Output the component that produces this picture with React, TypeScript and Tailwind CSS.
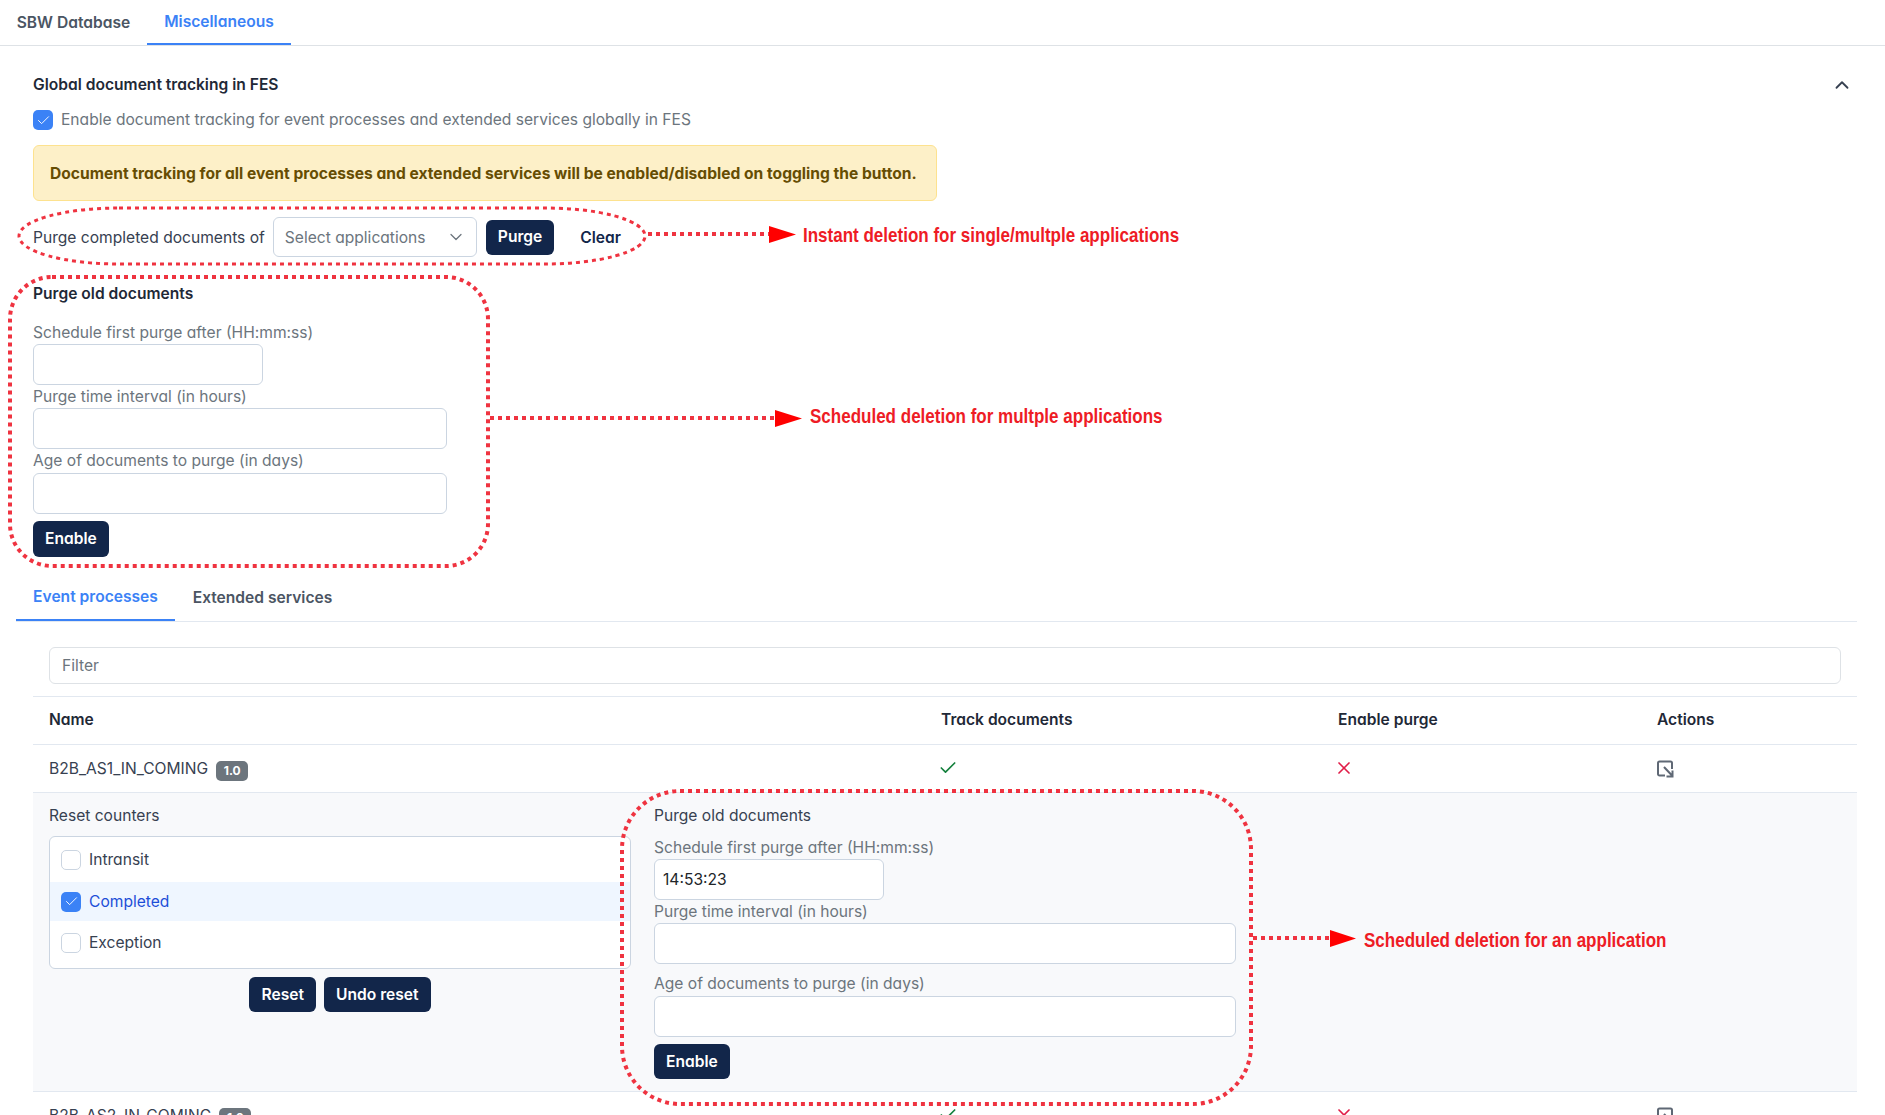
import React from 'react';
import { Check, ChevronDown, ChevronUp, X } from 'lucide-react';

const inter = "font-['Inter',sans-serif] [font-feature-settings:'cv11']";

const DarkButton = ({ label, className = '' }: { label: string; className?: string }) => (
  <button className={`bg-[#12264a] text-white font-semibold text-[15.6px] rounded-[6px] h-[35px] px-3 ${className}`}>{label}</button>
);

const Box = ({ checked }: { checked?: boolean }) => (
  <span className={`w-[20px] h-[20px] shrink-0 rounded-[5px] flex items-center justify-center ${checked ? 'bg-[#3b82f6]' : 'bg-white border border-[#cbd5e1]'}`}>
    {checked && <Check size={15} strokeWidth={1.5} className="text-white" />}
  </span>
);

const Field = ({ label, className, value, gap }: { label: string; className: string; value?: string; gap?: string }) => (
  <div className={gap}>
    <div className="text-[#6c757d] text-[15.6px] leading-[23px]">{label}</div>
    <div className={`h-[41px] bg-white border border-[#cbd5e1] rounded-[6px] px-2 flex items-center text-[15.6px] text-[#212529] ${className}`}>{value}</div>
  </div>
);

const ActionIcon = () => (
  <svg className="-ml-[1px]" width="18" height="18" viewBox="0 0 18 18" fill="none" stroke="#5f6875" strokeWidth="2">
    <path d="M16 9V3a1.5 1.5 0 0 0-1.5-1.5h-11A1.5 1.5 0 0 0 2 3v11a1.5 1.5 0 0 0 1.5 1.5H9" />
    <path d="M8 7l8 8.5M16.5 10.5v6h-6" />
  </svg>
);

const Tab = ({ label, active, className }: { label: string; active?: boolean; className: string }) => (
  <div className={`h-full flex items-center justify-center font-semibold text-[15.6px] ${active ? 'text-[#3b82f6] border-b-2 border-[#3b82f6]' : 'text-[#4b5563]'} ${className}`}>{label}</div>
);

const Row = ({ name }: { name: string }) => (
  <div className="grid grid-cols-[892px_397px_319px_1fr] h-[47px] pl-4 items-center text-[15.6px] text-[#374151]">
    <div className="flex items-center gap-2">
      <span>{name}</span>
      <span className="mt-[4px] bg-[#6c757d] text-white text-[12px] font-bold rounded-[5px] w-[32px] h-[20px] flex items-center justify-center">1.0</span>
    </div>
    <div><Check size={20} strokeWidth={2} className="text-[#15803d] -ml-[3px] -mt-[2px]" /></div>
    <div><X size={20} strokeWidth={2} className="text-[#e11d48] -ml-[4px] -mt-[2px]" /></div>
    <ActionIcon />
  </div>
);

const noteFont = "font-['Liberation_Sans',sans-serif] font-bold text-[#ee1c25] text-[21px] leading-none whitespace-nowrap origin-left scale-x-[0.81]";

const Notes = () => (
  <svg className="absolute left-0 top-0" width="1885" height="1115" fill="none" stroke="#ef3340" strokeWidth="4" strokeDasharray="4 4">
    <rect x="19" y="208" width="626" height="56" rx="100" ry="28" strokeWidth="3" />
    <path d="M648 234H770" />
    <path d="M769 226L796 234.500L769 243Z" fill="#ff0000" stroke="none" />
    <rect x="10" y="277" width="478" height="289" rx="42" />
    <path d="M490 418H776" />
    <path d="M775 410L802 418.500L775 427Z" fill="#ff0000" stroke="none" />
    <rect x="622" y="791" width="629" height="313" rx="58" />
    <path d="M1253 938H1332" />
    <path d="M1330 930L1356 938.500L1330 947Z" fill="#ff0000" stroke="none" />
  </svg>
);

const App: React.FC = () => {
  return (
    <div className={`relative h-[1115px] overflow-hidden bg-white ${inter}`}>
      <div className="flex h-[46px] border-b border-[#dee2e6]">
        <Tab label="SBW Database" className="w-[147px]" />
        <Tab label="Miscellaneous" active className="w-[144px]" />
      </div>

      <div className="pl-[16px] pr-[28px]">
        <div className="pl-[17px] pr-[4px]">
          <div className="flex justify-between items-center pt-[13px] h-[64px]">
            <h3 className="font-semibold text-[15.6px] text-[#1f2937]">Global document tracking in FES</h3>
            <ChevronUp size={22} className="text-[#374151]" />
          </div>
          <div className="flex items-center gap-[8px] h-[20px] text-[15.6px] text-[#6c757d]">
            <Box checked />
            <span>Enable document tracking for event processes and extended services globally in FES</span>
          </div>
          <div className="mt-[15px] w-[904px] h-[56px] bg-[#fdf0c8] border border-[#fde28f] rounded-[6px] flex items-center pl-4 pt-[1px] text-[15.6px] font-bold text-[#664d03] whitespace-nowrap">
            Document tracking for all event processes and extended services will be enabled/disabled on toggling the button.
          </div>
          <div className="flex items-center mt-[16px] h-[40px] text-[15.6px] text-[#374151]">
            <span className="pt-[1px]">Purge completed documents of</span>
            <div className="ml-[8px] w-[204px] h-[40px] border border-[#cbd5e1] rounded-[6px] pl-[11px] pr-[10px] flex items-center justify-between text-[#6c757d]">
              <span className="pt-[1px]">Select applications</span>
              <ChevronDown size={20} strokeWidth={1.5} />
            </div>
            <DarkButton label="Purge" className="ml-[9px]" />
            <span className="ml-[26px] pt-[1px] font-semibold text-[#12264a]">Clear</span>
          </div>

          <div className="mt-[25px]">
            <div className="font-semibold text-[15.6px] text-[#1f2937] leading-[23px]">Purge old documents</div>
            <Field label="Schedule first purge after (HH:mm:ss)" className="w-[230px]" gap="mt-[16px]" />
            <Field label="Purge time interval (in hours)" className="w-[414px]" />
            <Field label="Age of documents to purge (in days)" className="w-[414px] mt-[1px]" />
            <DarkButton label="Enable" className="mt-[7px] block h-[36px]" />
          </div>
        </div>

        <div className="flex h-[63px] pt-[15px] border-b border-[#e2e8f0] mt-[2px]">
          <Tab label="Event processes" active className="w-[159px]" />
          <Tab label="Extended services" className="w-[175px]" />
        </div>

        <div className="pl-[17px] pt-[25px]">
          <div className="pl-4 pr-[16px]">
            <div className="h-[37px] border border-[#dee2e6] rounded-[6px] pl-3 flex items-center text-[15.6px] text-[#6c757d]">Filter</div>
          </div>
          <div className="mt-[12px] border-t border-[#e2e8f0]">
            <div className="grid grid-cols-[892px_397px_319px_1fr] h-[48px] pl-4 pb-[1px] items-center text-[15.6px] font-semibold text-[#1f2937] border-b border-[#e2e8f0]">
              <div>Name</div>
              <div>Track documents</div>
              <div>Enable purge</div>
              <div>Actions</div>
            </div>
            <div className="border-b border-[#e2e8f0]"><Row name="B2B_AS1_IN_COMING" /></div>
            <div className="h-[299px] bg-[#f8f9fb] border-b border-[#e2e8f0] flex text-[15.6px]">
              <div className="w-[598px] pl-4 pt-[11px] shrink-0">
                <div className="leading-[23px] text-[#374151]">Reset counters</div>
                <div className="mt-[9px] bg-white border border-[#cbd5e1] rounded-[6px] h-[133px] text-[#374151]">
                  <div className="h-[45px] pl-[11px] flex items-center gap-[8px]"><Box /><span>Intransit</span></div>
                  <div className="h-[39px] pl-[11px] flex items-center gap-[8px] bg-[#eff6ff] text-[#1d4ed8]"><Box checked /><span>Completed</span></div>
                  <div className="h-[43px] pl-[11px] flex items-center gap-[8px]"><Box /><span>Exception</span></div>
                </div>
                <div className="mt-[8px] flex justify-center gap-2">
                  <DarkButton label="Reset" />
                  <DarkButton label="Undo reset" />
                </div>
              </div>
              <div className="ml-[23px] w-[582px] pt-[11px]">
                <div className="leading-[23px] text-[#374151]">Purge old documents</div>
                <Field label="Schedule first purge after (HH:mm:ss)" className="w-[230px]" value="14:53:23" gap="mt-[9px]" />
                <Field label="Purge time interval (in hours)" className="w-full" />
                <Field label="Age of documents to purge (in days)" className="w-full mt-[1px]" gap="mt-[8px]" />
                <DarkButton label="Enable" className="mt-[7px] block" />
              </div>
            </div>
            <Row name="B2B_AS2_IN_COMING" />
          </div>
        </div>
      </div>

      {/* annotations drawn over the page */}
      <Notes />
      <div className={`absolute left-[803px] top-[224px] ${noteFont}`}>Instant deletion for single/multple applications</div>
      <div className={`absolute left-[810px] top-[405px] ${noteFont}`}>Scheduled deletion for multple applications</div>
      <div className={`absolute left-[1364px] top-[929px] ${noteFont}`}>Scheduled deletion for an application</div>
    </div>
  );
};

export default App;
